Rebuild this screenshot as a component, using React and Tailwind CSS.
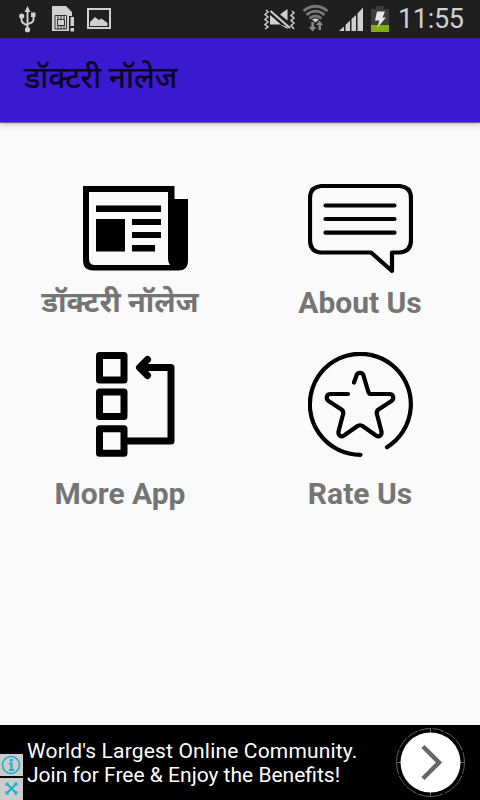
const NewsIcon = () => (
  <svg className="w-[105px] h-[105px]" viewBox="83 176 105 105">
    <path
      fillRule="evenodd"
      d="M83 186H174.500V199H188V261Q188 270.500 178.500 270.500H93.500Q83 270.500 83 260ZM89 192V259Q89 265 95 265H170Q168 262.500 168 259V192Z"
    />
    <path d="M96 205.500H161V212H96ZM96 219H125V251.500H96ZM132 219H161V225H132ZM132 232H161V238H132ZM132 245H155V251.500H132Z" />
  </svg>
);

const AboutIcon = () => (
  <svg
    className="w-[105px] h-[105px]"
    viewBox="308 176 105 105"
    fill="none"
    stroke="black"
    strokeWidth="4.200"
    strokeLinecap="round"
    strokeLinejoin="round"
  >
    <path d="M321 186H400Q411 187 411 198V240Q411 252 399 252.500H392V271L371 252.500H321Q310 252 310 240V198Q310 187 321 186Z" />
    <path d="M325.500 205.500H394.500M325.500 219H394.500M325.500 232.700H394.500" />
  </svg>
);

const MoreIcon = () => (
  <svg
    className="w-[105px] h-[105px]"
    viewBox="83 352 105 105"
    fill="none"
    stroke="black"
    strokeWidth="7"
    strokeLinecap="round"
    strokeLinejoin="round"
  >
    <path d="M99.500 355.500H124V380H99.500ZM99.500 392H124V416.500H99.500ZM99.500 428.700H124V453.300H99.500Z" />
    <path d="M126 441H171V367.500H141M147.500 359.500L139.500 367.500L147.500 375.500" />
  </svg>
);

const RateIcon = () => (
  <svg
    className="w-[105px] h-[105px]"
    viewBox="308 352 105 105"
    fill="none"
    stroke="black"
    strokeWidth="4.200"
    strokeLinecap="round"
    strokeLinejoin="round"
  >
    <path d="M360.500 454.800A50.500 50.500 0 1 1 387 447.200" />
    <path d="M354 382.500L356.500 375.500C357.500 372 362.500 372 363.500 375.500L368.200 391.500Q369 394 371 394H389.500C393.500 394 394.500 398.500 391.500 401L378.500 409.500Q376 411.500 377 414.500L381.500 431.500C382 435.500 379 437.500 376 435.500L362.500 426Q360 424.500 357.500 426L344 435.500C341 437.500 338 435.500 338.500 431.500L343 414.500Q344 411.500 341.500 409.500L328.500 401C325.500 398.500 326.500 394 330.500 394H348" />
  </svg>
);

const menu = [
  { label: 'डॉक्टरी नॉलेज', icon: NewsIcon, iconClass: 'pl-[31px]', labelClass: 'text-[29px] mt-[3px]' },
  { label: 'About Us', icon: AboutIcon, iconClass: '', labelClass: 'text-[30px] mt-1' },
  { label: 'More App', icon: MoreIcon, iconClass: 'pl-[31px]', labelClass: 'text-[30px] mt-[19px]' },
  { label: 'Rate Us', icon: RateIcon, iconClass: '', labelClass: 'text-[30px] mt-[19px]' },
];

const StatusBar = () => (
  <div className="flex h-[38px] shrink-0 items-center bg-[#1f1f1f] text-[#d0d0d0]">
    <svg className="h-[38px] w-[130px]" viewBox="0 0 130 38" fill="currentColor">
      {/* USB */}
      <g fill="none" stroke="currentColor" strokeWidth="1.900">
        <path d="M27.500 29V10M21.500 17V20Q22 23.500 27 25M33.500 16V20Q33 22.500 28 24" />
      </g>
      <path d="M27.500 6L30.500 12H24.500ZM31 12.500H35.500V17H31Z" />
      <circle cx="21.700" cy="16" r="2.600" />
      <circle cx="27.500" cy="29.700" r="2.600" />
      {/* SIM card */}
      <path d="M52 6H66L72 12V16H69V31H52Z" />
      <path
        d="M55 15.500H66.500V29H55ZM58 15.500V19M61 15.500V19M64 15.500V19M58 25V29M61 25V29M64 25V29M57.500 19.500H64.500V25.500H57.500Z"
        fill="none"
        stroke="#1f1f1f"
        strokeWidth="0.900"
      />
      <path d="M69 16H75V32H69Z" fill="#1f1f1f" />
      <path d="M70.500 17H74V26H70.500ZM70.500 28H74V31.500H70.500Z" />
      {/* Picture */}
      <path d="M88 9H110V28H88Z" fill="none" stroke="currentColor" strokeWidth="2" />
      <path d="M90 26V22L95 17L99 20L101.500 18.500L107.500 23V26Z" />
    </svg>
    <svg className="ml-auto h-[38px] w-[147px]" viewBox="250 0 147 38" fill="currentColor">
      {/* Vibrate */}
      <path d="M280 14.500L287.500 9V20.500ZM270 15L281 24.500H270Z" />
      <path d="M270.500 11L290 28" stroke="currentColor" strokeWidth="2" />
      <path d="M279 24L287.500 29V27Z" />
      <path
        d="M266 10L268 12L265 14.500L268 17L265 19.500L268 22L265 24.500L268 27L265 29M292 11L294 13L291 15.500L294 18L291 20.500L294 23L291 25.500L294 29"
        fill="none"
        stroke="currentColor"
        strokeWidth="1.500"
      />
      {/* Wifi */}
      <g fill="none" stroke="#777" strokeWidth="2.800">
        <path d="M303.500 11Q315.500 1.500 327.500 11" />
        <path d="M306.500 14.800Q315.500 7.500 324.500 14.800" />
        <path d="M309.500 18.500Q315.500 13.500 321.500 18.500" />
      </g>
      <path d="M312 19.500Q315.500 17.500 319 19.500L315.500 22.500Z" />
      <path
        d="M311.300 22H314V27H316.500L312.500 31.500L309 27H311.300ZM318.500 30H321V25H323L319.500 20.500L316 25H318.500Z"
        fill="#888"
      />
      {/* Signal */}
      <path d="M339 31L344 26.500V31ZM345.500 25L350 20.500V31H345.500ZM351.500 19L356 15V31H351.500ZM357.500 13.500L363 7.500V31H357.500Z" />
      {/* Battery */}
      <path d="M371 9H376V6H384V9H389V32H371Z" fill="#3c3c3c" />
      <path d="M371 25H389V32H371Z" fill="#7fae12" />
      <path d="M377 11.500H385L382.500 17.500H386L377 28L379.500 20.500H375Z" fill="#e6e6e6" />
    </svg>
    <span className="w-[83px] whitespace-nowrap pl-px font-['Roboto','Noto_Sans',sans-serif] text-[27px] leading-[38px] tracking-[-0.3px]">
      11:55
    </span>
  </div>
);

const AdBanner = () => (
  <div className="flex h-[75px] shrink-0 bg-black">
    <div className="mt-[29px] flex w-[23px] flex-col gap-0.5">
      <svg className="h-[22px] w-[23px] bg-[#ccc]" viewBox="0 0 23 22" fill="none" stroke="#16b0cc">
        <circle cx="11" cy="11" r="8.500" strokeWidth="1.500" />
        <path d="M11.300 5V7.500" strokeWidth="3" />
        <path d="M9 9.500H11.500V16M9 16H14" strokeWidth="2" />
      </svg>
      <svg className="h-[22px] w-[23px] bg-[#ccc]" viewBox="0 0 23 22" fill="none" stroke="#16b0cc">
        <path d="M6 5L17 16M17 5L6 16" strokeWidth="1.800" />
        <path d="M5 7H8V4M15 4V7H18M5 14H8V17M15 17V14H18" strokeWidth="1" />
      </svg>
    </div>
    <div className="ml-1 mt-[14px] whitespace-nowrap font-['Roboto','Noto_Sans',sans-serif] text-[21px] leading-6 text-white">
      <p className="tracking-[0.17px]">World's Largest Online Community.</p>
      <p>Join for Free &amp; Enjoy the Benefits!</p>
    </div>
    <svg className="ml-auto mr-[14px] h-[75px] w-[72px]" viewBox="0 0 72 75" fill="none">
      <circle cx="36.500" cy="37.500" r="34" stroke="#777" strokeWidth="0.800" strokeDasharray="12 1.500" />
      <path d="M36.500 3V72M2 37.500H71" stroke="#777" strokeWidth="0.800" />
      <circle cx="36.500" cy="37.500" r="30" fill="white" />
      <path d="M29 21.500L45 37.500L29 53.500" stroke="#666" strokeWidth="4.500" />
    </svg>
  </div>
);

const App = () => {
  return (
    <div className="flex h-[800px] w-[480px] flex-col overflow-hidden bg-[#fafafa]">
      <StatusBar />
      <header className="z-10 flex h-[84px] shrink-0 items-center bg-[#3a1ad1] pb-1 pl-6 shadow-[0_1px_1px_#00000080,0_3px_6px_#00000030]">
        <h1 className="whitespace-nowrap font-['Roboto','Noto_Sans_Devanagari','Noto_Sans',sans-serif] text-[30px] font-medium leading-9 text-[#0b0520]">
          डॉक्टरी नॉलेज
        </h1>
      </header>

      <main className="grid flex-1 grid-cols-2 content-start gap-y-[31px] pt-[54px]">
        {menu.map(({ label, icon: Icon, iconClass, labelClass }) => (
          <div key={label} className="flex flex-col items-center">
            <div className={iconClass}>
              <Icon />
            </div>
            <span
              className={`whitespace-nowrap font-['Roboto','Noto_Sans_Devanagari','Noto_Sans',sans-serif] font-bold leading-9 text-[#757575] ${labelClass}`}
            >
              {label}
            </span>
          </div>
        ))}
      </main>

      <AdBanner />
    </div>
  );
};

export default App;
